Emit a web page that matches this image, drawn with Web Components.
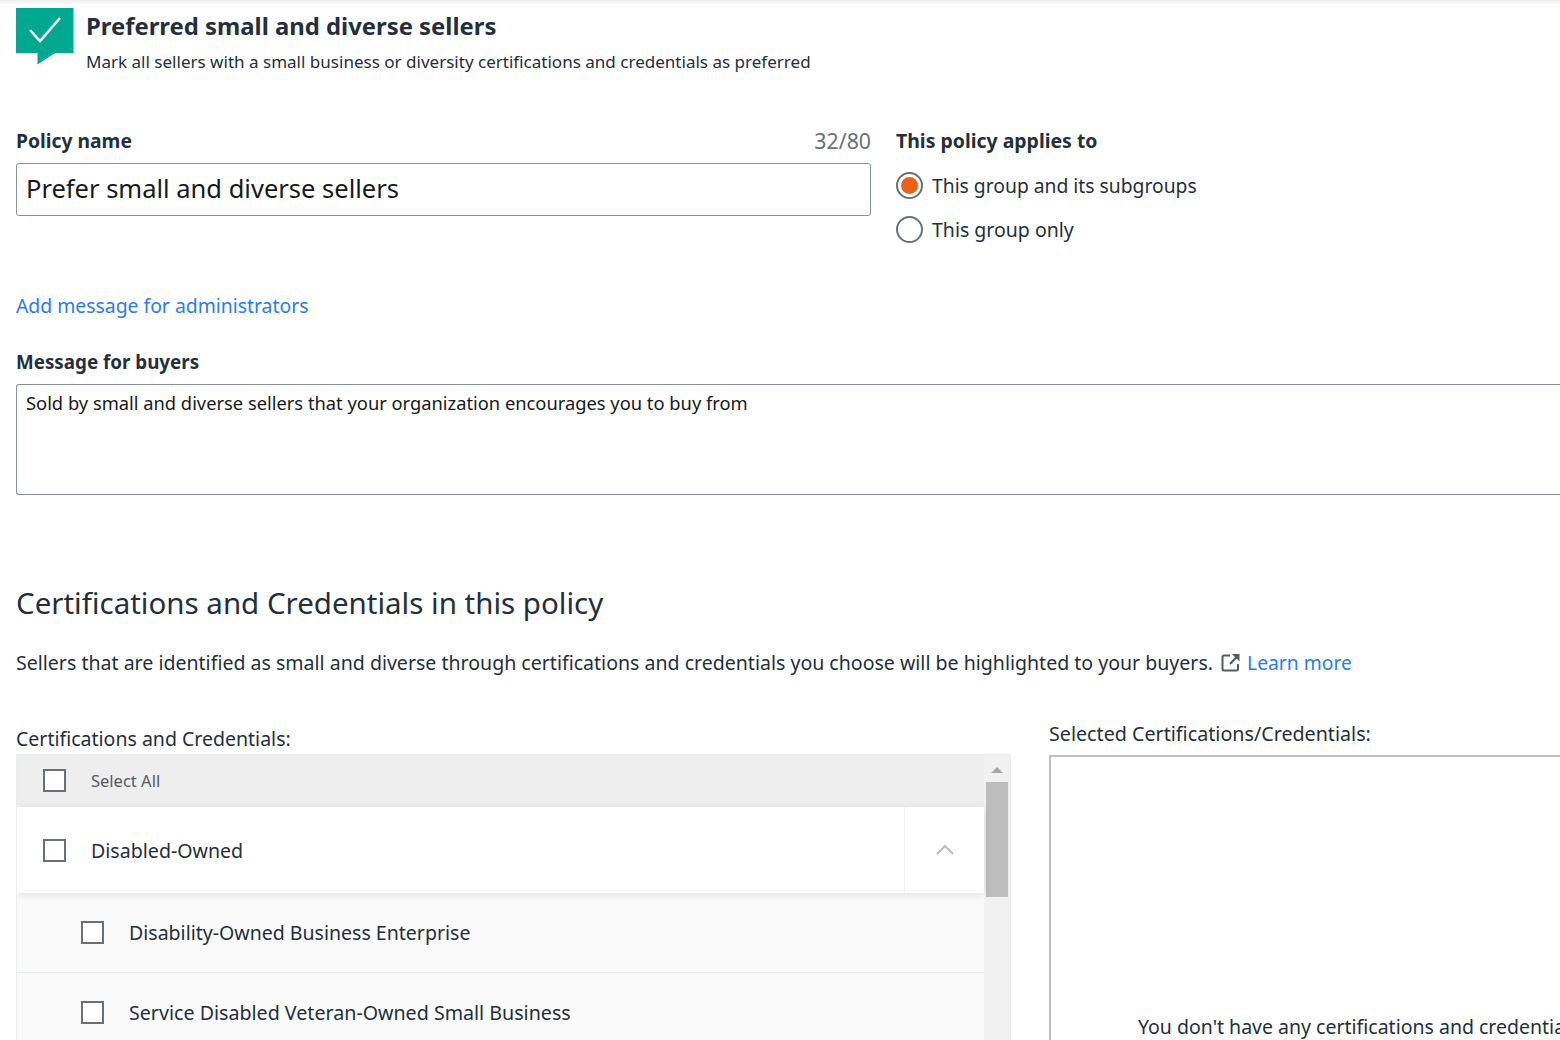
<!DOCTYPE html>
<html>
<head>
<meta charset="utf-8">
<title>Preferred small and diverse sellers</title>
<style>
  html, body { margin: 0; padding: 0; background: #fff; height: 1040px; overflow: hidden; }
  body { font-family: "Noto Sans", "Liberation Sans", sans-serif; color: #16191f; }
</style>
</head>
<body>
<policy-page></policy-page>
<script>
// small helper so each element only has to give its style and markup
class Base extends HTMLElement {
  constructor() {
    super();
    this.attachShadow({ mode: 'open' });
  }
  connectedCallback() {
    this.shadowRoot.innerHTML = `<style>${this.css()}</style>${this.html()}`;
  }
  css() { return ':host { display: block; }'; }
  html() { return '<slot></slot>'; }
}

class PolicyHeader extends Base {
  css() {
    return `
      :host { display: flex; align-items: flex-start; gap: 12px; height: 60px; padding-top: 4px; padding-left: 16px;
        background: linear-gradient(#efefef 0, #f8f8f8 4px, #fff 4px) no-repeat top / 100% 5px; }
      svg { display: block; margin-top: 4px; flex: none; }
      .title { font-size: 23.850px; line-height: 34px; font-weight: 700; color: #232f3e; margin-top: 5px; }
      .sub { font-size: 17.050px; line-height: 24px; color: #232f3e; margin-top: 7px; }
    `;
  }
  html() {
    return `
      <svg width="58" height="57" viewBox="0 0 58 57">
        <path d="M0 0H57.500V45H39L21.500 56.500V45H0Z" fill="#00a88f"/>
        <path d="M14 22L24 33L44 10" fill="none" stroke="#fff" stroke-width="2.500"/>
      </svg>
      <div>
        <div class="title">Preferred small and diverse sellers</div>
        <div class="sub">Mark all sellers with a small business or diversity certifications and credentials as preferred</div>
      </div>`;
  }
}

class FieldLabel extends Base {
  css() {
    return `
      :host { display: flex; justify-content: space-between; font-size: var(--label-size, 19.300px); line-height: 26px; font-weight: 700; color: #232f3e; }
      .count { font-weight: 400; font-size: 21.300px; color: #687078; }
    `;
  }
  html() {
    const c = this.getAttribute('count');
    return `<span><slot></slot></span>${c ? `<span class="count">${c}</span>` : ''}`;
  }
}

class TextBox extends Base {
  css() {
    return `
      :host { display: block; box-sizing: border-box; border: 1px solid #879596; border-radius: 3px; background: #fff; color: #16191f; }
      :host([big]) { height: 53px; padding: 0 9px; font-size: 25.500px; line-height: 48px; }
      :host([area]) { height: 111px; padding: 5px 9px; font-size: 18.320px; line-height: 25px; border-right: 0; border-radius: 3px 0 0 3px; margin-right: -40px; }
    `;
  }
}

class RadioOption extends Base {
  css() {
    return `
      :host { display: flex; align-items: center; gap: 9px; height: 44px; font-size: var(--radio-size, 19.300px); color: #232f3e; }
      .r { box-sizing: border-box; width: 27px; height: 27px; border: 2px solid #687078; border-radius: 50%; background: #fff; flex: none; display: flex; align-items: center; justify-content: center; }
      .d { width: 17px; height: 17px; border-radius: 50%; background: #ec5f14; }
    `;
  }
  html() {
    return `<span class="r">${this.hasAttribute('checked') ? '<span class="d"></span>' : ''}</span><span><slot></slot></span>`;
  }
}

class CheckRow extends Base {
  css() {
    return `
      :host { display: flex; align-items: center; box-sizing: border-box; color: #232f3e; }
      :host([kind=all]) { height: 52px; background: #eeeeee; padding-left: 26px; font-size: 16.500px; color: #545b64; padding-bottom: 1px; }
      :host([kind=group]) { height: 86px; background: #fff; padding-left: 26px; font-size: 19.600px; position: relative; z-index: 1; box-shadow: 0 2px 8px rgba(0,0,0,.10); }
      :host([kind=item]) { height: 80px; background: #fafafa; padding-left: 64px; font-size: var(--item-size, 19.550px); border-bottom: 1px solid #eaeded; }
      .box { box-sizing: border-box; width: 23px; height: 23px; border: 2.500px solid #687078; background: #fff; flex: none; margin-right: 25px; }
      .chev { margin-left: auto; width: 79px; align-self: stretch; border-left: 1px solid #f2f3f3; display: flex; align-items: center; justify-content: center; }
    `;
  }
  html() {
    const chev = this.hasAttribute('open')
      ? `<span class="chev"><svg width="20" height="12" viewBox="0 0 20 12"><path d="M2 10L10 2L18 10" fill="none" stroke="#b8bcbf" stroke-width="2"/></svg></span>` : '';
    return `<span class="box"></span><span><slot></slot></span>${chev}`;
  }
}

class CertList extends Base {
  css() {
    return `
      :host { display: flex; width: 995px; height: 300px; box-sizing: border-box; border: 1px solid #eaeded; border-bottom: 0; background: #fafafa; overflow: hidden; }
      .rows { flex: 1; min-width: 0; }
      .bar { width: 26px; flex: none; background: #f1f1f1; position: relative; }
      .up { width: 0; height: 0; margin: 12px auto 0; border: 6px solid transparent; border-top: 0; border-bottom: 6px solid #a8a8a8; }
      .thumb { width: 22px; height: 115px; margin: 9px auto 0; background: #bdbdbd; }
    `;
  }
  html() {
    return `<div class="rows"><slot></slot></div><div class="bar"><div class="up"></div><div class="thumb"></div></div>`;
  }
}

class SelectedBox extends Base {
  css() {
    return `
      :host { display: block; box-sizing: border-box; height: 300px; width: 620px; border: 2px solid #bcc2c4; border-bottom: 0; background: #fff; padding: 257px 0 0 87px; font-size: 19.500px; line-height: 26px; color: #232f3e; white-space: nowrap; }
    `;
  }
}

class PolicyPage extends Base {
  css() {
    return `
      :host { display: block; height: 1040px; overflow: hidden; }
      .body { padding-left: 16px; }
      .row { display: flex; gap: 25px; margin-top: 64px; }
      .left { width: 855px; flex: none; }
      .left text-box { margin-top: 9px; }
      .right { --label-size: 19.450px; }
      .radios { margin-top: 9px; }
      .link { color: #2a7cf0; }
      .add { font-size: 19.370px; line-height: 28px; margin-top: 41px; }
      .msg { margin-top: 29px; --label-size: 18.800px; }
      .msg text-box { margin-top: 9px; }
      h2 { font-size: 29.500px; line-height: 40px; font-weight: 400; color: #232f3e; margin: 88px 0 0; }
      .desc { display: flex; align-items: center; font-size: 19.560px; line-height: 28px; color: #232f3e; margin-top: 26px; white-space: nowrap; }
      .desc svg { margin: 0 7px 2px 8px; flex: none; }
      .desc .link { font-size: 19.300px; }
      .cols { display: flex; gap: 38px; margin-top: 43px; align-items: flex-start; }
      .cap { font-size: 19.520px; line-height: 28px; color: #232f3e; margin: 5px 0 1px; }
      .cap.sel { font-size: 19.700px; margin: 0 0 7px; }
      .long { --item-size: 19.650px; }
    `;
  }
  html() {
    return `
      <policy-header></policy-header>
      <div class="body">
        <div class="row">
          <div class="left">
            <field-label count="32/80">Policy name</field-label>
            <text-box big>Prefer small and diverse sellers</text-box>
          </div>
          <div class="right">
            <field-label>This policy applies to</field-label>
            <div class="radios">
              <radio-option checked>This group and its subgroups</radio-option>
              <radio-option style="--radio-size:19.500px">This group only</radio-option>
            </div>
          </div>
        </div>
        <div class="add link">Add message for administrators</div>
        <div class="msg">
          <field-label>Message for buyers</field-label>
          <text-box area>Sold by small and diverse sellers that your organization encourages you to buy from</text-box>
        </div>
        <h2>Certifications and Credentials in this policy</h2>
        <div class="desc">Sellers that are identified as small and diverse through certifications and credentials you choose will be highlighted to your buyers.
          <svg width="19" height="19" viewBox="0 0 19 19" fill="none" stroke="#545b64" stroke-width="2">
            <path d="M9 2.500H3A1.500 1.500 0 0 0 1.500 4V16A1.500 1.500 0 0 0 3 17.500H15.500A1.500 1.500 0 0 0 17 16V11"/>
            <path d="M9 11L15.500 4"/>
            <path d="M11 1H18.500V8.500Z" fill="#545b64" stroke="none"/>
          </svg><span class="link">Learn more</span></div>
        <div class="cols">
          <div>
            <div class="cap">Certifications and Credentials:</div>
            <cert-list>
              <check-row kind="all">Select All</check-row>
              <check-row kind="group" open>Disabled-Owned</check-row>
              <check-row kind="item">Disability-Owned Business Enterprise</check-row>
              <check-row kind="item" class="long">Service Disabled Veteran-Owned Small Business</check-row>
            </cert-list>
          </div>
          <div>
            <div class="cap sel">Selected Certifications/Credentials:</div>
            <selected-box>You don't have any certifications and credentials selected</selected-box>
          </div>
        </div>
      </div>`;
  }
}

customElements.define('policy-header', PolicyHeader);
customElements.define('field-label', FieldLabel);
customElements.define('text-box', TextBox);
customElements.define('radio-option', RadioOption);
customElements.define('check-row', CheckRow);
customElements.define('cert-list', CertList);
customElements.define('selected-box', SelectedBox);
customElements.define('policy-page', PolicyPage);
</script>
</body>
</html>
